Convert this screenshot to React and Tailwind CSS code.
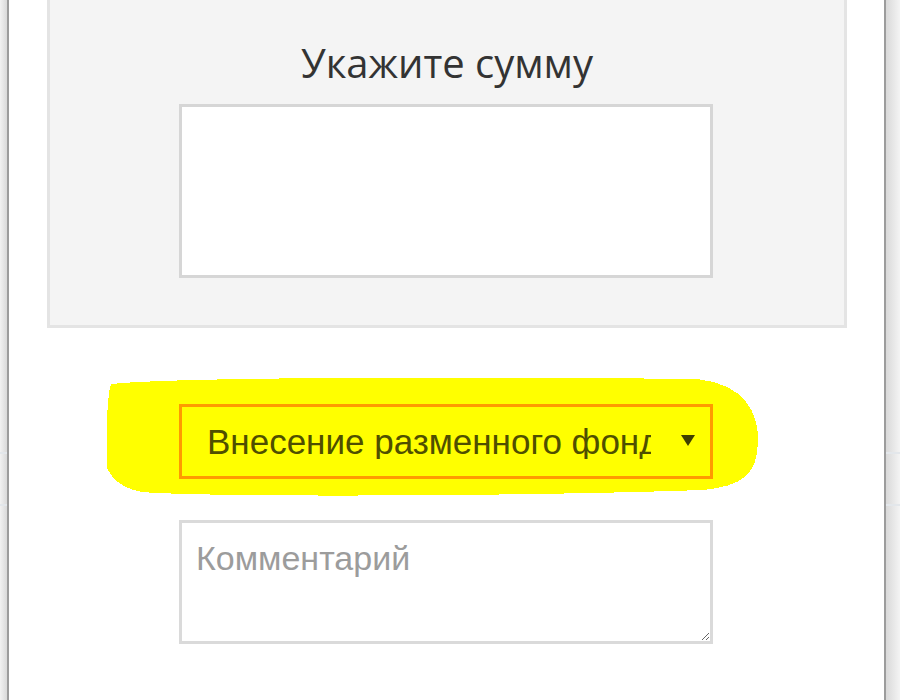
import React from 'react';

const sans = { fontFamily: '"Liberation Sans", Arial, sans-serif' };

function SideStrip({ side }) {
    const grad = side === 'left'
        ? 'bg-gradient-to-r from-[#f2f2f2] to-[#d9d9d9]'
        : 'bg-gradient-to-r from-[#d9d9d9] to-[#f4f4f4]';
    return (
        <div className={`${grad} h-full`} style={{ width: side === 'left' ? 7 : 14 }}>
            <div className="mt-[452px] h-[54px] border-y-2 border-[#e3e7eb]" />
        </div>
    );
}

function Highlight() {
    // marker-style yellow blob behind the select
    return (
        <svg
            className="absolute left-[-72px] top-[-28px]"
            width="652"
            height="122"
            viewBox="0 0 652 122"
            shapeRendering="crispEdges"
        >
            <path
                d="M4 8 C60 2 300 0 590 3 C640 8 652 40 651 66 C650 98 636 110 596 114 C393 121 93 121 35 116 C12 112 4 100 0 92 L0 42 C1 24 2 14 4 8 Z"
                fill="#ffff00"
            />
        </svg>
    );
}

export default function App() {
    return (
        <div className="w-[900px] h-[700px] flex bg-white overflow-hidden">
            <SideStrip side="left" />

            <div className="w-[879px] h-full border-x-2 border-[#9c9c9c] bg-white">
                {/* Amount panel */}
                <div className="ml-[38px] w-[800px] bg-[#f4f4f4] border-x-[3px] border-b-[3px] border-[#e4e4e4] pt-[42px] pb-[47px]">
                    <h2
                        className="text-center text-[40px] leading-[41px] h-[41px] text-[#333333] mb-[21px]"
                        style={{ fontFamily: '"Open Sans", sans-serif' }}
                    >
                        Укажите сумму
                    </h2>
                    <div className="ml-[129px] w-[534px] h-[174px] bg-white border-[3px] border-[#d6d6d6]" />
                </div>

                {/* Operation type select */}
                <div className="relative ml-[170px] mt-[76px] w-[534px] h-[75px]">
                    <Highlight />
                    <div
                        className="relative flex items-center h-full bg-[#ffff00] border-[3px] border-[#ff9a00] pl-[25px] pr-[15px]"
                        style={sans}
                    >
                        <div className="w-[444px] overflow-hidden whitespace-nowrap text-[35px] leading-none text-[#4f4f00]">
                            Внесение разменного фонда
                        </div>
                        <div className="ml-auto mb-[2px] w-0 h-0 border-l-[7px] border-r-[7px] border-t-[11px] border-l-transparent border-r-transparent border-t-[#3f3f00]" />
                    </div>
                </div>

                {/* Comment */}
                <textarea
                    className="block ml-[170px] mt-[41px] w-[534px] h-[124px] border-[3px] border-[#dadada] pl-[14px] pt-[18px] text-[34px] leading-none text-[#333] placeholder:text-[#9c9c9c] outline-none"
                    style={sans}
                    placeholder="Комментарий"
                />
            </div>

            <SideStrip side="right" />
        </div>
    );
}
